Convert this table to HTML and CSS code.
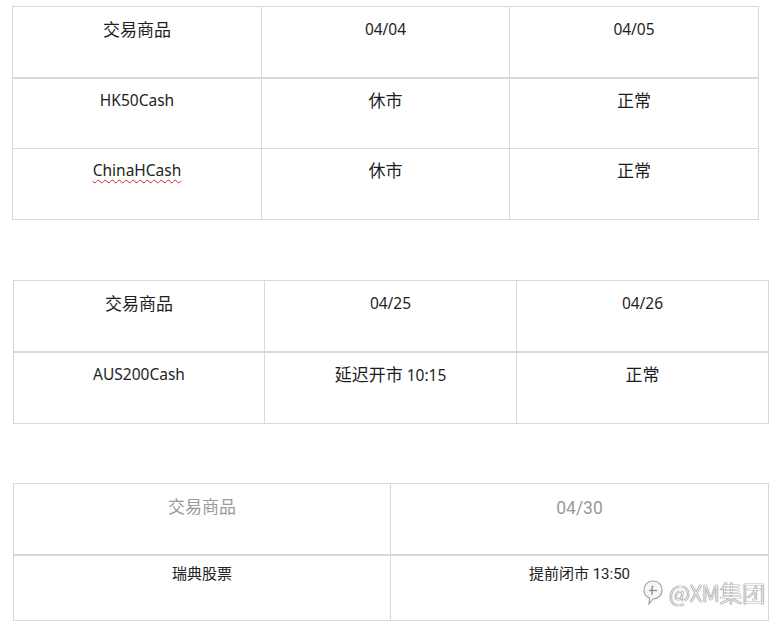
FILE: index.html
```html
<!DOCTYPE html>
<html lang="zh">
<head>
<meta charset="utf-8">
<link rel="stylesheet" href="styles.css">
</head>
<body>
<table class="grid t1">
  <tr class="head">
    <td class="w249"><span class="zh">交易商品</span></td>
    <td class="w248">04/04</td>
    <td class="w249">04/05</td>
  </tr>
  <tr class="body first">
    <td>HK50Cash</td>
    <td><span class="zh">休市</span></td>
    <td><span class="zh">正常</span></td>
  </tr>
  <tr class="body">
    <td><span class="spell">ChinaHCash</span></td>
    <td><span class="zh">休市</span></td>
    <td><span class="zh">正常</span></td>
  </tr>
</table>

<table class="grid t2">
  <tr class="head">
    <td class="w251"><span class="zh">交易商品</span></td>
    <td class="w252">04/25</td>
    <td class="w252">04/26</td>
  </tr>
  <tr class="body">
    <td>AUS200Cash</td>
    <td><span class="zh">延迟开市</span> 10:15</td>
    <td><span class="zh">正常</span></td>
  </tr>
</table>

<table class="grid t3">
  <tr class="head">
    <td class="w377 gray"><span class="zh">交易商品</span></td>
    <td class="w378 gray"><span class="num">04/30</span></td>
  </tr>
  <tr class="body short">
    <td><span class="zs">瑞典股票</span></td>
    <td><span class="zs">提前闭市</span> 13:50</td>
  </tr>
</table>

<div class="watermark">
  <svg class="wm-icon" width="22" height="27" viewBox="0 0 22 27">
    <path d="M11 2 C5.5 2 2 6 2 11 C2 15 4.5 18 7.5 19 L7 25 L11 20 C16.5 20 20 16 20 11 C20 6 16.5 2 11 2 Z" fill="#f6f6f6" stroke="#9c9c9c" stroke-width="1.1"/>
    <path d="M7 11.5 H15" stroke="#8a8a8a" stroke-width="1.3" fill="none"/>
    <path d="M11.3 7 C10.3 7.2 10 8 10 9 V16" stroke="#8a8a8a" stroke-width="1.3" fill="none"/>
  </svg>
  <span class="wm-text">@XM集团</span>
</div>
</body>
</html>
```

FILE: styles.css
```css
html, body {
  margin: 0;
  padding: 0;
  background: #ffffff;
}

body {
  position: relative;
  width: 778px;
  height: 633px;
  overflow: hidden;
  font-family: "Noto Sans", "Noto Sans CJK SC", sans-serif;
  color: #1e1e1e;
}

.grid {
  border-collapse: separate;
  border-spacing: 0;
  table-layout: fixed;
  border-top: 1px solid #d9d9d9;
  border-left: 1px solid #d9d9d9;
}

.grid td {
  box-sizing: border-box;
  border-right: 1px solid #d9d9d9;
  border-bottom: 1px solid #d9d9d9;
  padding: 9px 0 0 0;
  vertical-align: top;
  text-align: center;
  font-size: 15.5px;
  line-height: 24px;
  overflow: hidden;
}

.grid .head td {
  height: 72px;
  border-bottom-width: 2px;
  padding-top: 10px;
}

.grid .body td {
  height: 71px;
}

.grid .body.first td {
  height: 70px;
}

.t1 {
  width: 747px;
  margin: 6px 0 0 12px;
}

.t2 {
  width: 756px;
  margin: 60px 0 0 13px;
}

.t3 {
  width: 756px;
  margin: 59px 0 0 13px;
  font-family: Roboto, "Noto Sans CJK SC", sans-serif;
}

.w248 { width: 248px; }
.w249 { width: 249px; }
.w251 { width: 251px; }
.w252 { width: 252px; }
.w377 { width: 377px; }
.w378 { width: 378px; }

.zh {
  font-family: "Noto Sans CJK SC", sans-serif;
  font-size: 17px;
}

.spell {
  text-decoration: underline wavy #e02020;
  text-decoration-thickness: 1px;
  text-underline-offset: 3px;
}

.t3 td {
  font-family: Roboto, "Noto Sans CJK SC", sans-serif;
  color: #222;
}

.t3 .head td {
  padding-top: 10px;
  font-size: 17px;
}

.t3 .gray {
  color: #999999;
}

.num {
  display: inline-block;
  font-size: 17.5px;
  padding-top: 2px;
}

.t3 .body.short td {
  height: 65px;
  padding-top: 5px;
  font-size: 15px;
}

.zs {
  font-family: "Noto Sans CJK SC", sans-serif;
  font-size: 15px;
}

.watermark {
  position: absolute;
  left: 642px;
  top: 578px;
  display: flex;
  align-items: center;
  gap: 5px;
}

.wm-icon {
  display: block;
}

.wm-text {
  font-family: "Noto Sans CJK SC", sans-serif;
  font-size: 23px;
  font-weight: 300;
  line-height: 28px;
  color: #f7f7f7;
  text-shadow: 0 0 1px #666, 0 0 1px #777, 0 0 1px #999;
  letter-spacing: -0.3px;
}
```
